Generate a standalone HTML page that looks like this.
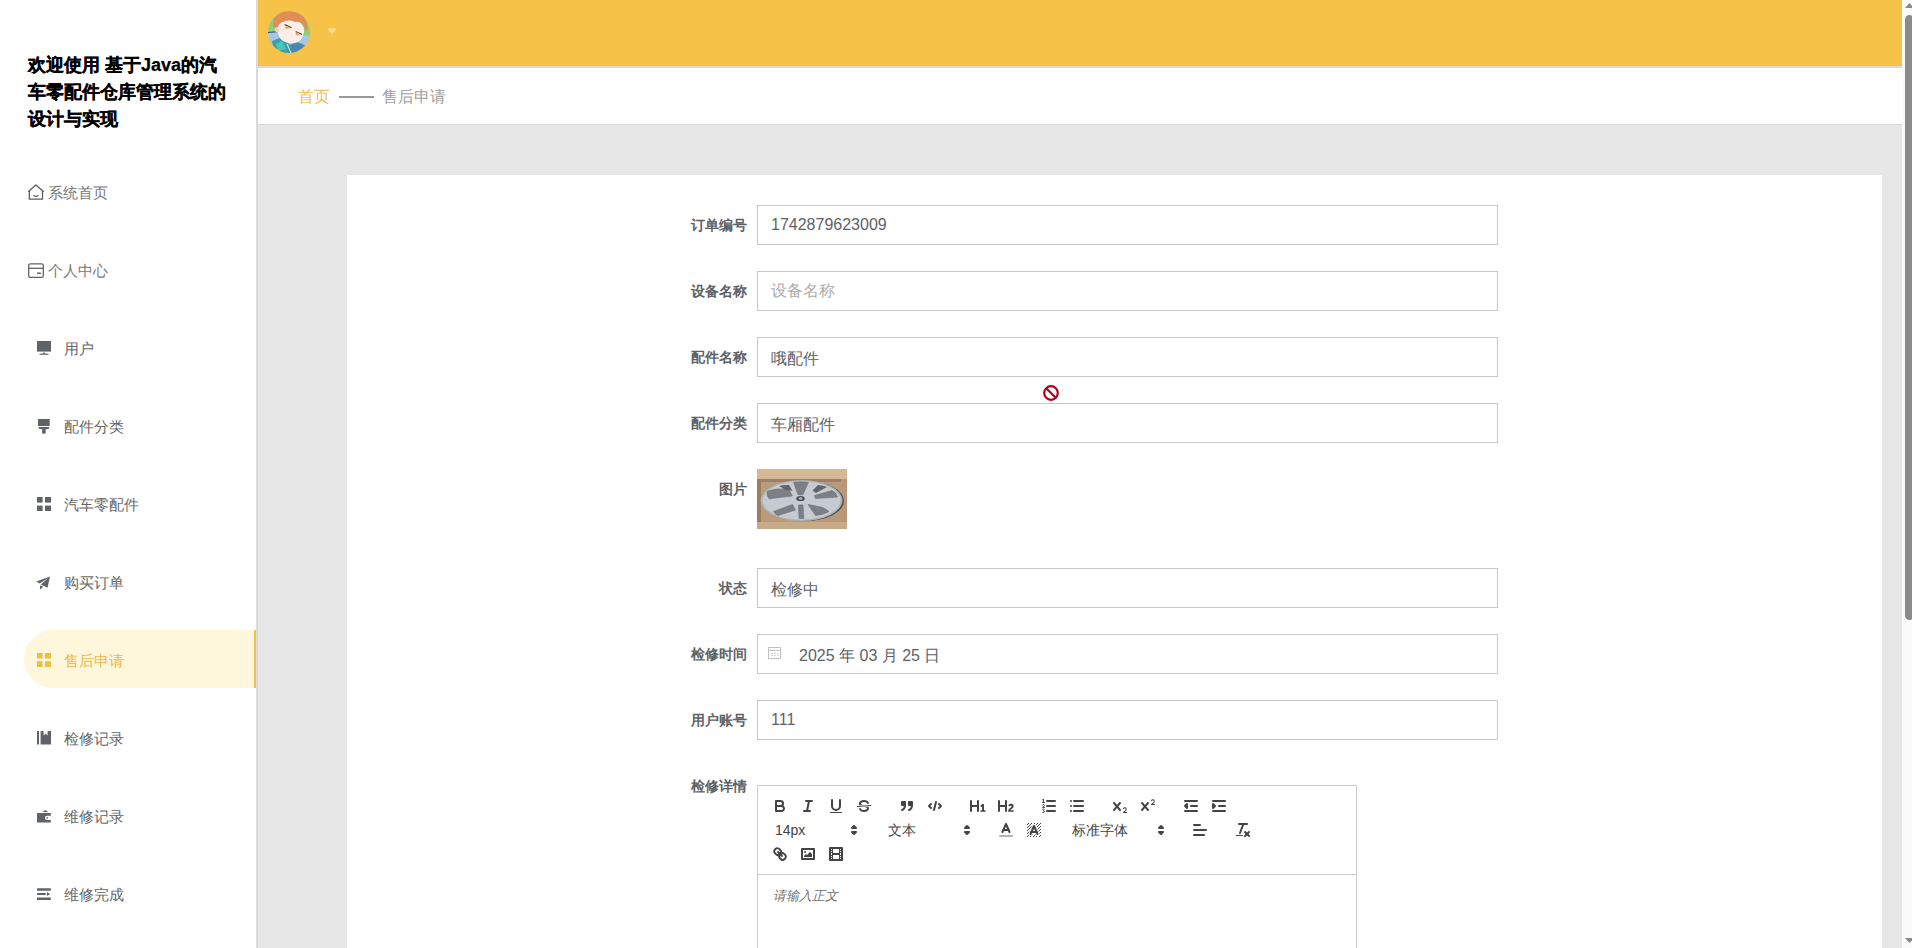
<!DOCTYPE html>
<html><head><meta charset="utf-8">
<style>
*{box-sizing:border-box;margin:0;padding:0}
html,body{width:1912px;height:948px;overflow:hidden;background:#fff;font-family:"Liberation Sans",sans-serif}
#side{position:absolute;left:0;top:0;width:256px;height:948px;background:#fff}
#sideb{position:absolute;left:256px;top:0;width:2px;height:948px;background:#d9d9d9}
#title{position:absolute;left:28px;top:52px;width:205px;font-size:18px;font-weight:bold;line-height:27px;color:#000;-webkit-text-stroke:0.25px #000}
.mi{position:absolute;left:0;width:256px;height:58px;font-size:15px;color:#666}
.mi .tx{position:absolute;top:21px;line-height:18px;white-space:nowrap}
.mi svg{position:absolute}
.mi.act{left:24px;width:232px;background:#fef7dc;border-radius:29px 0 0 29px;color:#ecb84a}
.mi.act:after{content:"";position:absolute;right:0;top:0;width:2px;height:58px;background:#ecc25a}
#hdr{position:absolute;left:258px;top:0;width:1644px;height:66px;background:#f6c348}
#hdrb{position:absolute;left:258px;top:66px;width:1644px;height:2px;background:#dcd6d8}
#bc{position:absolute;left:258px;top:68px;width:1644px;height:56px;background:#fff}
#bcb{position:absolute;left:258px;top:124px;width:1644px;height:1px;background:#d6d6d6}
#main{position:absolute;left:258px;top:125px;width:1644px;height:823px;background:#e7e7e7}
#card{position:absolute;left:347px;top:175px;width:1535px;height:773px;background:#fff}
#sb{position:absolute;left:1902px;top:0;width:10px;height:948px;background:#fbfbfb}
.lab{position:absolute;left:600px;width:147px;text-align:right;font-size:14px;font-weight:bold;color:#606266;line-height:20px}
.inp{position:absolute;left:757px;width:741px;height:40px;border:1px solid #c9c9c9;background:#fff;font-size:16px;color:#606266;padding-left:13px;line-height:38px;white-space:nowrap}
.ph{color:#acacac}
#ed{position:absolute;left:757px;top:785px;width:600px}
#tb{border:1px solid #ccc;padding:8px;font-family:"Liberation Sans",sans-serif;line-height:0}
#tb:after{content:"";display:table;clear:both}
.fm{display:inline-block;vertical-align:middle;margin-right:15px}
.fm:after{content:"";display:table;clear:both}
.b{display:inline-block;float:left;width:28px;height:24px;padding:3px 5px}
.b svg{float:left;height:100%;width:18px}
.s{fill:none;stroke:#444;stroke-linecap:round;stroke-linejoin:round;stroke-width:2}
.s.t{stroke-width:1}
.f{fill:#444}
.f.s{fill:#444}
.pk{display:inline-block;float:left;height:24px;position:relative;vertical-align:middle;color:#444;font-size:14px;font-weight:500}
.pl{position:absolute;left:0;top:0;height:24px;padding-left:9px;line-height:24px;white-space:nowrap}
.pk svg{position:absolute;right:1px;top:3px;width:18px;height:18px}
#ct{border:1px solid #ccc;border-top:0;height:200px;position:relative}
#plh{position:absolute;left:15px;top:12px;font-size:13px;line-height:18px;font-style:italic;color:rgba(0,0,0,0.6)}
</style></head><body>
<div id="side">
  <div id="title">欢迎使用 基于Java的汽车零配件仓库管理系统的设计与实现</div>
  <div class="mi" style="top:163px">
    <svg style="left:28px;top:21px" width="16" height="16" viewBox="0 0 16 16"><path d="M0.7 7.3 L7.8 0.9 L15.2 7.3" fill="none" stroke="#5e5e5e" stroke-width="1.3" stroke-linejoin="round" stroke-linecap="round"/><path d="M1.3 6.9 V15.2 H14.5 V6.9" fill="none" stroke="#5e5e5e" stroke-width="1.3" stroke-linejoin="round"/><path d="M5.6 11.5 Q7.9 13.4 10.2 11.5" fill="none" stroke="#5e5e5e" stroke-width="1.1" stroke-linecap="round"/></svg>
    <span class="tx" style="left:48px;color:#777">系统首页</span>
  </div>
  <div class="mi" style="top:241px">
    <svg style="left:28px;top:22px" width="16" height="16" viewBox="0 0 16 16"><rect x="0.7" y="0.8" width="14.6" height="13.6" rx="1.6" fill="none" stroke="#636363" stroke-width="1.3"/><line x1="0.7" y1="5.3" x2="15.3" y2="5.3" stroke="#636363" stroke-width="1.3"/><line x1="9.6" y1="10.2" x2="12.4" y2="10.2" stroke="#636363" stroke-width="1.5" stroke-linecap="round"/></svg>
    <span class="tx" style="left:48px;color:#777">个人中心</span>
  </div>
  <div class="mi" style="top:319px">
    <svg style="left:37px;top:22px" width="14" height="14" viewBox="0 0 14 14"><rect x="0" y="0" width="14" height="10.6" fill="#5f6368"/><rect x="2.5" y="12.6" width="9" height="1.2" fill="#5f6368"/><rect x="6" y="11.6" width="2" height="1.2" fill="#5f6368"/></svg>
    <span class="tx" style="left:64px">用户</span>
  </div>
  <div class="mi" style="top:397px">
    <svg style="left:38px;top:22px" width="12" height="15" viewBox="0 0 12 15"><rect x="0" y="0.1" width="11.7" height="6.8" rx="0.4" fill="#5f6368"/><path d="M0.7 8.1 H11 V9.6 Q10.6 10.2 8 10.3 H3.7 Q1.1 10.2 0.7 9.6 Z" fill="#5f6368"/><rect x="4.1" y="9.8" width="3.6" height="4.9" rx="1.3" fill="#5f6368"/></svg>
    <span class="tx" style="left:64px">配件分类</span>
  </div>
  <div class="mi" style="top:475px">
    <svg style="left:37px;top:22px" width="14" height="14" viewBox="0 0 14 14"><rect x="0" y="0" width="5.6" height="5.6" fill="#5f6368"/><rect x="8" y="0" width="6" height="5.6" fill="#5f6368"/><rect x="0" y="8.6" width="5.6" height="5.4" fill="#5f6368"/><rect x="8" y="8.6" width="6" height="5.4" fill="#5f6368"/></svg>
    <span class="tx" style="left:64px">汽车零配件</span>
  </div>
  <div class="mi" style="top:553px">
    <svg style="left:36px;top:23px" width="15" height="15" viewBox="0 0 15 15"><path d="M14 0.5 L0.3 5.5 L3.6 7.6 L12 2.2 L4.8 8.4 L11.5 11.8 Z" fill="#5f6368"/><path d="M4.2 9.2 L3.8 13.8 L7.2 10.8 Z" fill="#5f6368"/></svg>
    <span class="tx" style="left:64px">购买订单</span>
  </div>
  <div class="mi act" style="top:630px">
    <svg style="left:13px;top:23px" width="14" height="14" viewBox="0 0 14 14"><rect x="0" y="0" width="5.6" height="5.6" fill="#eebf45"/><rect x="8" y="0" width="6" height="5.6" fill="#eebf45"/><rect x="0" y="8.2" width="5.6" height="5.8" fill="#eebf45"/><rect x="8" y="8.2" width="6" height="5.8" fill="#eebf45"/></svg>
    <span class="tx" style="left:40px;top:22px">售后申请</span>
  </div>
  <div class="mi" style="top:709px">
    <svg style="left:37px;top:22px" width="14" height="14" viewBox="0 0 14 14"><rect x="0" y="0" width="2" height="13.5" fill="#5f6368"/><path d="M3.6 0 H6.6 V4.4 L8.6 2.6 L10.6 4.4 V0 H14 V13.5 H3.6 Z" fill="#5f6368"/></svg>
    <span class="tx" style="left:64px">检修记录</span>
  </div>
  <div class="mi" style="top:787px">
    <svg style="left:37px;top:22px" width="14" height="14" viewBox="0 0 14 14"><path d="M5.6 2.9 Q8.3 -0.2 11 2.9 Z" fill="#5f6368"/><path d="M0 4 H13.8 V6.8 H10 A2.1 2.1 0 0 0 10 11 H13.8 V13.6 H0 Z" fill="#5f6368"/><circle cx="10.2" cy="8.9" r="0.8" fill="#5f6368"/></svg>
    <span class="tx" style="left:64px">维修记录</span>
  </div>
  <div class="mi" style="top:865px">
    <svg style="left:37px;top:22px" width="14" height="14" viewBox="0 0 14 14"><rect x="0" y="1.3" width="13.8" height="2.5" rx="0.5" fill="#5f6368"/><rect x="0" y="6.1" width="8.7" height="1.9" rx="0.5" fill="#5f6368"/><path d="M9.9 5 L13.2 7 L9.9 8.9 Z" fill="#5f6368"/><rect x="0" y="10.5" width="13.8" height="2.4" rx="0.5" fill="#5f6368"/></svg>
    <span class="tx" style="left:64px">维修完成</span>
  </div>
</div>
<div id="sideb"></div>
<div id="hdr">
  <svg style="position:absolute;left:10px;top:11px" width="42" height="42" viewBox="0 0 42 42">
    <defs><clipPath id="av"><circle cx="21" cy="21" r="21"/></clipPath><filter id="avb" x="-5%" y="-5%" width="110%" height="110%"><feGaussianBlur stdDeviation="0.45"/></filter></defs>
    <g clip-path="url(#av)"><g filter="url(#avb)">
      <rect width="42" height="42" fill="#8fcf7a"/>
      <path d="M0 21 L12 20 L20 30 L28 23 L42 25 V42 H0 Z" fill="#a6c6e6"/>
      <path d="M4 30 L14 26 L22 34 L30 30 L34 42 H6 Z" fill="#3f9fa6"/>
      <path d="M8 33 L14 30 L18 38 L10 40 Z" fill="#47c6bd"/>
      <path d="M22 34 L32 32 L40 36 L36 42 H24 Z" fill="#4b86b3"/>
      <path d="M0 21.5 L11 20.5" stroke="#2a4a6a" stroke-width="1"/>
      <path d="M19 33 L23 42" stroke="#e6f0f2" stroke-width="1"/>
      <path d="M9 14 Q12 7 22 8 Q33 9 36 17 Q37 26 30 31 Q22 34 15 30 Q9 26 9 14 Z" fill="#fcefea"/>
      <ellipse cx="9" cy="18.5" rx="2.2" ry="2.8" fill="#f3cfc4"/>
      <path d="M5 17 Q4 6 12 2 Q22 -2 32 2 Q40 7 39.5 22 Q37 17 35 14 Q33 10 27 11 Q22 8.5 16 10.5 Q11 11.5 10 16 Z" fill="#e28d56"/>
      
      <path d="M17 13.8 L23 16.6" stroke="#3a2e28" stroke-width="1.1" stroke-linecap="round"/>
      <ellipse cx="19" cy="16.5" rx="2" ry="1.5" fill="#e3b25c"/>
      <path d="M28 20.8 L33.5 23.2" stroke="#3a2e28" stroke-width="1.1" stroke-linecap="round"/>
      <ellipse cx="29.5" cy="23" rx="2" ry="1.4" fill="#e3b25c"/>
    </g></g>
  </svg>
  <svg style="position:absolute;left:69px;top:28px" width="10" height="7" viewBox="0 0 10 7"><path d="M0.5 0.5 H9.5 L5 6.5 Z" fill="#fadd92"/></svg>
</div>
<div id="hdrb"></div>
<div id="bc">
  <span style="position:absolute;left:40px;top:20px;font-size:16px;line-height:18px;color:#efbd4c">首页</span>
  <span style="position:absolute;left:81px;top:28px;width:35px;height:2px;background:#9a9a9a"></span>
  <span style="position:absolute;left:124px;top:20px;font-size:16px;line-height:18px;color:#a0a0a0">售后申请</span>
</div>
<div id="bcb"></div>
<div id="main"></div>
<div id="card"></div>

<div class="lab" style="top:215px">订单编号</div>
<div class="inp" style="top:205px">1742879623009</div>
<div class="lab" style="top:281px">设备名称</div>
<div class="inp ph" style="top:271px">设备名称</div>
<div class="lab" style="top:347px">配件名称</div>
<div class="inp" style="top:337px;line-height:42px">哦配件</div>
<div class="lab" style="top:413px">配件分类</div>
<div class="inp" style="top:403px;line-height:42px">车厢配件</div>
<div class="lab" style="top:479px">图片</div>
<svg style="position:absolute;left:757px;top:469px" width="90" height="60" viewBox="0 0 90 60">
  <rect width="90" height="60" fill="#b99a7a"/>
  <rect x="0" y="0" width="90" height="10" fill="#d5b994"/>
  <rect x="0" y="10" width="90" height="3" fill="#9a8068"/>
  <rect x="0" y="10" width="4" height="50" fill="#9c7e62"/>
  <rect x="84" y="10" width="6" height="50" fill="#b89878"/>
  <rect x="0" y="53" width="90" height="7" fill="#c8aa88"/>
  <ellipse cx="48" cy="32" rx="39" ry="20" fill="#4f5356"/>
  <ellipse cx="44.5" cy="31.5" rx="41" ry="20.5" fill="#aeb3b7"/>
  <ellipse cx="44.5" cy="31.5" rx="39" ry="19.3" fill="#c7cbcf"/>
  <g fill="#7a8086" stroke="#6a7076" stroke-width="0.6" stroke-linejoin="round">
    <path d="M36.5 13.2 Q44 12.2 51.5 13.2 L46 25.5 Q43.5 26.2 41 25.5 Z"/>
    <path d="M10.5 22 Q20 19 31.5 20 L35.5 27 L12 29.8 Q9 26 10.5 22 Z"/>
    <path d="M57.5 26.5 L75 21.5 Q79.5 23.5 80.5 28 L58.5 29.5 Z"/>
    <path d="M16.5 42.5 L35.5 35.5 L38.5 41 L21 46.5 Q17.5 45 16.5 42.5 Z"/>
    <path d="M51 35.5 L66 38.5 L72 42.5 Q66 46 58.5 46.5 Z"/>
    <path d="M41.5 36 L46 36 L46.8 49.5 L42 49.5 Z"/>
  </g>
  <g fill="#5f656b">
    <path d="M22 17 Q27 15.5 32 16 L35.5 22 L28 20.5 Z"/>
    <path d="M55.5 21.5 L61 16 Q66 16.5 70 18 L59 24 Z"/>
  </g>
  <ellipse cx="43.5" cy="29.5" rx="4.2" ry="2.6" fill="#3d4850"/>
  <ellipse cx="43.5" cy="29.5" rx="2" ry="1.2" fill="#b4babe"/>
</svg>
<div class="lab" style="top:578px">状态</div>
<div class="inp" style="top:568px;line-height:42px">检修中</div>
<div class="lab" style="top:644px">检修时间</div>
<div class="inp" style="top:634px;padding-left:41px;line-height:42px">2025 年 03 月 25 日
  <svg style="position:absolute;left:10px;top:12px" width="13" height="12" viewBox="0 0 13 12"><rect x="0.5" y="0.5" width="12" height="11" fill="none" stroke="#c2c2c2"/><line x1="0.5" y1="3.4" x2="12.5" y2="3.4" stroke="#c2c2c2"/><g fill="#cbcbcb"><rect x="3.2" y="6" width="1.8" height="1"/><rect x="6" y="6" width="1.8" height="1"/><rect x="9" y="6" width="1.6" height="1"/><rect x="3.2" y="8.1" width="1.8" height="1"/><rect x="6" y="8.1" width="1.8" height="1"/><rect x="9" y="8.1" width="1.6" height="1"/></g></svg>
</div>
<div class="lab" style="top:710px">用户账号</div>
<div class="inp" style="top:700px">111</div>
<div class="lab" style="top:776px">检修详情</div>

<div id="ed">
  <div id="tb">
    <span class="fm">
      <i class="b"><svg viewBox="0 0 18 18"><path class="s" d="M5,4H9.5A2.5,2.5,0,0,1,12,6.5v0A2.5,2.5,0,0,1,9.5,9H5A0,0,0,0,1,5,9V4A0,0,0,0,1,5,4Z"/><path class="s" d="M5,9h5.5A2.5,2.5,0,0,1,13,11.5v0A2.5,2.5,0,0,1,10.5,14H5a0,0,0,0,1,0,0V9A0,0,0,0,1,5,9Z"/></svg></i>
      <i class="b"><svg viewBox="0 0 18 18"><line class="s" x1="7" x2="13" y1="4" y2="4"/><line class="s" x1="5" x2="11" y1="14" y2="14"/><line class="s" x1="8" x2="10" y1="14" y2="4"/></svg></i>
      <i class="b"><svg viewBox="0 0 18 18"><path class="s" d="M5,3V9a4.012,4.012,0,0,0,4,4H9a4.012,4.012,0,0,0,4-4V3"/><rect class="f" height="1" rx="0.5" ry="0.5" width="12" x="3" y="15"/></svg></i>
      <i class="b"><svg viewBox="0 0 18 18"><line class="s t" x1="15.5" x2="2.5" y1="8.5" y2="9.5"/><path class="f" d="M9.007,8C6.542,7.791,6,7.519,6,6.5,6,5.792,7.283,5,9,5c1.571,0,2.765.679,2.969,1.309a1,1,0,0,0,1.9-.617C13.356,4.106,11.354,3,9,3,6.2,3,4,4.538,4,6.5a3.2,3.2,0,0,0,.5,1.843Z"/><path class="f" d="M8.984,10C11.457,10.208,12,10.479,12,11.5c0,0.708-1.283,1.5-3,1.5-1.571,0-2.765-.679-2.969-1.309a1,1,0,1,0-1.9.617C4.644,13.894,6.646,15,9,15c2.8,0,5-1.538,5-3.5a3.2,3.2,0,0,0-.5-1.843Z"/></svg></i>
    </span><span class="fm">
      <i class="b"><svg viewBox="0 0 18 18"><rect class="f s" height="3" width="3" x="4" y="5"/><rect class="f s" height="3" width="3" x="11" y="5"/><path class="s" fill="none" d="M7,8c0,4.031-3,5-3,5"/><path class="s" fill="none" d="M14,8c0,4.031-3,5-3,5"/></svg></i>
      <i class="b"><svg viewBox="0 0 18 18"><polyline class="s" points="5 7 3 9 5 11"/><polyline class="s" points="13 7 15 9 13 11"/><line class="s" x1="10" x2="8" y1="5" y2="13"/></svg></i>
    </span><span class="fm">
      <i class="b"><svg viewBox="0 0 18 18"><path class="f" d="M10,4V14a1,1,0,0,1-2,0V10H3v4a1,1,0,0,1-2,0V4A1,1,0,0,1,3,4V8H8V4a1,1,0,0,1,2,0Zm6.06787,9.209H14.98975V7.59863a.54085.54085,0,0,0-.605-.60547h-.62744a1.01119,1.01119,0,0,0-.748.29688L11.645,8.56641a.5435.5435,0,0,0-.022.8584l.28613.30762a.53861.53861,0,0,0,.84717.0332l.09912-.08789a1.2137,1.2137,0,0,0,.2417-.35254h.02246s-.01123.30859-.01123.60547V13.209H12.041a.54085.54085,0,0,0-.605.60547v.43945a.54085.54085,0,0,0,.605.60547h4.02686a.54085.54085,0,0,0,.605-.60547v-.43945A.54085.54085,0,0,0,16.06787,13.209Z"/></svg></i>
      <i class="b"><svg viewBox="0 0 18 18"><path class="f" d="M16.73975,13.81445v.43945a.54085.54085,0,0,1-.605.60547H11.855a.58392.58392,0,0,1-.64893-.60547V14.0127c0-2.90527,3.39941-3.42187,3.39941-4.55469a.77675.77675,0,0,0-.84717-.78125,1.17684,1.17684,0,0,0-.83594.38477c-.2749.26367-.561.374-.85791.13184l-.4292-.34082c-.30811-.24219-.38525-.51758-.1543-.81445a2.97155,2.97155,0,0,1,2.45361-1.17676,2.45393,2.45393,0,0,1,2.68408,2.40918c0,2.45312-3.1792,2.92676-3.27832,3.93848h2.79443A.54085.54085,0,0,1,16.73975,13.81445ZM9,3A.99974.99974,0,0,0,8,4V8H3V4A1,1,0,0,0,1,4V14a1,1,0,0,0,2,0V10H8v4a1,1,0,0,0,2,0V4A.99974.99974,0,0,0,9,3Z"/></svg></i>
    </span><span class="fm">
      <i class="b"><svg viewBox="0 0 18 18"><line class="s" x1="7" x2="15" y1="4" y2="4"/><line class="s" x1="7" x2="15" y1="9" y2="9"/><line class="s" x1="7" x2="15" y1="14" y2="14"/><line class="s t" x1="2.5" x2="4.5" y1="5.5" y2="5.5"/><path class="f" d="M3.5,6A0.5,0.5,0,0,1,3,5.5V3.085l-0.276.138A0.5,0.5,0,0,1,2.053,3c-0.124-.247-0.023-0.324.224-0.447l1-.5A0.5,0.5,0,0,1,4,2.5v3A0.5,0.5,0,0,1,3.5,6Z"/><path class="s t" d="M4.5,10.5h-2c0-.234,1.85-1.076,1.85-2.234A0.959,0.959,0,0,0,2.5,8.156"/><path class="s t" d="M2.5,12.2 C3.2,11.7 4.4,12 4.3,12.9 C4.2,13.5 3.7,13.7 3.4,13.8 C3.9,13.9 4.5,14.2 4.4,14.9 C4.3,15.8 3,15.9 2.5,15.4"/></svg></i>
      <i class="b"><svg viewBox="0 0 18 18"><line class="s" x1="6" x2="15" y1="4" y2="4"/><line class="s" x1="6" x2="15" y1="9" y2="9"/><line class="s" x1="6" x2="15" y1="14" y2="14"/><line class="s" x1="3" x2="3" y1="4" y2="4"/><line class="s" x1="3" x2="3" y1="9" y2="9"/><line class="s" x1="3" x2="3" y1="14" y2="14"/></svg></i>
    </span><span class="fm">
      <i class="b"><svg viewBox="0 0 18 18"><path class="f" d="M15.5,15H13.861a3.858,3.858,0,0,0,1.914-2.975,1.8,1.8,0,0,0-1.6-1.751A1.921,1.921,0,0,0,12.021,11.7a0.50013,0.50013,0,1,0,.957.291h0a0.914,0.914,0,0,1,1.053-.725,0.81,0.81,0,0,1,.744.762c0,1.076-1.16971,1.86982-1.93971,2.43082A1.45639,1.45639,0,0,0,12,15.5a0.5,0.5,0,0,0,.5.5h3A0.5,0.5,0,0,0,15.5,15Z"/><path class="f" d="M9.65,5.241a1,1,0,0,0-1.409.108L6,7.964,3.759,5.349A1,1,0,0,0,2.192,6.59178Q2.21541,6.6213,2.241,6.649L4.684,9.5,2.241,12.35A1,1,0,0,0,3.71,13.70722q0.02557-.02768.049-0.05722L6,11.036,8.241,13.65a1,1,0,1,0,1.567-1.24277Q9.78459,12.3777,9.759,12.35L7.316,9.5,9.759,6.651A1,1,0,0,0,9.65,5.241Z"/></svg></i>
      <i class="b"><svg viewBox="0 0 18 18"><path class="f" d="M15.5,7H13.861a4.015,4.015,0,0,0,1.914-2.975,1.8,1.8,0,0,0-1.6-1.751A1.922,1.922,0,0,0,12.021,3.7a0.5,0.5,0,1,0,.957.291,0.917,0.917,0,0,1,1.053-.725,0.81,0.81,0,0,1,.744.762c0,1.077-1.164,1.925-1.934,2.486A1.423,1.423,0,0,0,12,7.5a0.5,0.5,0,0,0,.5.5h3A0.5,0.5,0,0,0,15.5,7Z"/><path class="f" d="M9.651,5.241a1,1,0,0,0-1.41.108L6,7.964,3.759,5.349a1,1,0,1,0-1.519,1.3L4.683,9.5,2.241,12.35a1,1,0,1,0,1.519,1.3L6,11.036,8.241,13.65a1,1,0,0,0,1.519-1.3L7.317,9.5,9.759,6.651A1,1,0,0,0,9.651,5.241Z"/></svg></i>
    </span><span class="fm">
      <i class="b"><svg viewBox="0 0 18 18"><line class="s" x1="3" x2="15" y1="14" y2="14"/><line class="s" x1="3" x2="15" y1="4" y2="4"/><line class="s" x1="9" x2="15" y1="9" y2="9"/><polyline class="s" points="5 7 5 11 3 9 5 7"/></svg></i>
      <i class="b"><svg viewBox="0 0 18 18"><line class="s" x1="3" x2="15" y1="14" y2="14"/><line class="s" x1="3" x2="15" y1="4" y2="4"/><line class="s" x1="9" x2="15" y1="9" y2="9"/><polyline class="f s" points="3 7 3 11 5 9 3 7"/></svg></i>
    </span><span class="fm">
      <span class="pk" style="width:98px"><span class="pl">14px</span><svg viewBox="0 0 18 18"><polygon class="s" points="7 11 9 13 11 11 7 11"/><polygon class="s" points="7 7 9 5 11 7 7 7"/></svg></span>
    </span><span class="fm">
      <span class="pk" style="width:98px"><span class="pl">文本</span><svg viewBox="0 0 18 18"><polygon class="s" points="7 11 9 13 11 11 7 11"/><polygon class="s" points="7 7 9 5 11 7 7 7"/></svg></span>
    </span><span class="fm">
      <i class="b"><svg viewBox="0 0 18 18"><line class="s" style="opacity:.4" x1="3" x2="15" y1="15" y2="15"/><polyline class="s" points="5.5 11 9 3 12.5 11"/><line class="s" x1="11.63" x2="6.38" y1="9" y2="9"/></svg></i>
      <i class="b"><svg viewBox="0 0 18 18"><g class="f"><polygon points="6 6.868 6 6 5 6 5 7 5.942 7 6 6.868"/><rect height="1" width="1" x="4" y="4"/><polygon points="6.817 5 6 5 6 6 6.38 6 6.817 5"/><rect height="1" width="1" x="2" y="6"/><rect height="1" width="1" x="3" y="5"/><rect height="1" width="1" x="4" y="7"/><polygon points="4 11.439 4 11 3 11 3 12 3.755 12 4 11.439"/><rect height="1" width="1" x="2" y="12"/><rect height="1" width="1" x="2" y="9"/><rect height="1" width="1" x="2" y="15"/><polygon points="4.63 10 4 10 4 11 4.192 11 4.63 10"/><rect height="1" width="1" x="3" y="8"/><path d="M10.832,4.2L11,4.582V4H10.708A1.948,1.948,0,0,1,10.832,4.2Z"/><path d="M7,4.582L7.168,4.2A1.929,1.929,0,0,1,7.292,4H7V4.582Z"/><path d="M8,13H7.683l-0.351.8a1.933,1.933,0,0,1-.124.2H8V13Z"/><rect height="1" width="1" x="12" y="2"/><rect height="1" width="1" x="11" y="3"/><path d="M9,3H8V3.282A1.985,1.985,0,0,1,9,3Z"/><rect height="1" width="1" x="2" y="3"/><rect height="1" width="1" x="6" y="2"/><rect height="1" width="1" x="3" y="2"/><rect height="1" width="1" x="5" y="3"/><rect height="1" width="1" x="9" y="2"/><rect height="1" width="1" x="15" y="14"/><polygon points="13.447 10.174 13.469 10.225 13.472 10.232 13.808 11 14 11 14 10 13.37 10 13.447 10.174"/><rect height="1" width="1" x="13" y="7"/><rect height="1" width="1" x="15" y="5"/><rect height="1" width="1" x="14" y="6"/><rect height="1" width="1" x="15" y="8"/><rect height="1" width="1" x="14" y="9"/><path d="M3.775,14H3v1H4V14.314A1.97,1.97,0,0,1,3.775,14Z"/><rect height="1" width="1" x="14" y="3"/><polygon points="12 6.868 12 6 11.62 6 12 6.868"/><rect height="1" width="1" x="15" y="2"/><rect height="1" width="1" x="12" y="5"/><rect height="1" width="1" x="13" y="4"/><polygon points="12.933 9 13 9 13 8 12.495 8 12.933 9"/><rect height="1" width="1" x="9" y="14"/><rect height="1" width="1" x="8" y="15"/><path d="M6,14.926V15H7V14.316A1.993,1.993,0,0,1,6,14.926Z"/><rect height="1" width="1" x="5" y="15"/><path d="M10.668,13.8L10.317,13H10v1h0.792A1.947,1.947,0,0,1,10.668,13.8Z"/><rect height="1" width="1" x="11" y="15"/><path d="M14.332,12.2a1.99,1.99,0,0,1,.166.8H15V12H14.245Z"/><rect height="1" width="1" x="14" y="15"/><rect height="1" width="1" x="15" y="11"/></g><polyline class="s" points="5.5 13 9 5 12.5 13"/><line class="s" x1="11.63" x2="6.38" y1="11" y2="11"/></svg></i>
    </span><span class="fm">
      <span class="pk" style="width:108px"><span class="pl">标准字体</span><svg viewBox="0 0 18 18"><polygon class="s" points="7 11 9 13 11 11 7 11"/><polygon class="s" points="7 7 9 5 11 7 7 7"/></svg></span>
    </span><span class="fm">
      <i class="b"><svg viewBox="0 0 18 18"><line class="s" x1="3" x2="15" y1="9" y2="9"/><line class="s" x1="3" x2="13" y1="14" y2="14"/><line class="s" x1="3" x2="9" y1="4" y2="4"/></svg></i>
    </span><span class="fm">
      <i class="b"><svg viewBox="0 0 18 18"><line class="s" x1="5" x2="13" y1="3" y2="3"/><line class="s" x1="6" x2="9.35" y1="12" y2="3"/><line class="s" x1="11" x2="15" y1="11" y2="15"/><line class="s" x1="15" x2="11" y1="11" y2="15"/><rect class="f" height="1" rx="0.5" ry="0.5" width="7" x="2" y="14"/></svg></i>
    </span><span class="fm">
      <i class="b"><svg viewBox="0 0 18 18"><line class="s" x1="7" x2="11" y1="7" y2="11"/><path class="s" d="M8.9,4.577a3.476,3.476,0,0,1,.36,4.679A3.476,3.476,0,0,1,4.577,8.9C3.185,7.5,2.035,6.4,4.217,4.217S7.5,3.185,8.9,4.577Z"/><path class="s" d="M13.423,9.1a3.476,3.476,0,0,0-4.679-.36,3.476,3.476,0,0,0,.36,4.679c1.392,1.392,2.5,2.542,4.679.36S14.815,10.5,13.423,9.1Z"/></svg></i>
      <i class="b"><svg viewBox="0 0 18 18"><rect class="s" height="10" width="12" x="3" y="4"/><circle class="f" cx="6" cy="7" r="1"/><polyline class="f" points="5 12 5 11 7 9 8 10 11 7 13 9 13 12 5 12"/></svg></i>
      <i class="b"><svg viewBox="0 0 18 18"><rect class="s" height="12" width="12" x="3" y="3"/><rect class="f" height="12" width="1" x="5" y="3"/><rect class="f" height="12" width="1" x="12" y="3"/><rect class="f" height="2" width="8" x="5" y="8"/><rect class="f" height="1" width="3" x="3" y="5"/><rect class="f" height="1" width="3" x="3" y="7"/><rect class="f" height="1" width="3" x="3" y="10"/><rect class="f" height="1" width="3" x="3" y="12"/><rect class="f" height="1" width="3" x="12" y="5"/><rect class="f" height="1" width="3" x="12" y="7"/><rect class="f" height="1" width="3" x="12" y="10"/><rect class="f" height="1" width="3" x="12" y="12"/></svg></i>
    </span>
  </div>
  <div id="ct"><span id="plh">请输入正文</span></div>
</div>

<svg style="position:absolute;left:1043px;top:385px" width="16" height="16" viewBox="0 0 16 16"><circle cx="8" cy="8" r="6.8" fill="none" stroke="#b00020" stroke-width="2.2"/><line x1="3.5" y1="3.5" x2="12.5" y2="12.5" stroke="#b00020" stroke-width="2.2"/></svg>
<div id="sb">
  <svg style="position:absolute;left:0;top:0" width="10" height="948" viewBox="0 0 10 948">
    <path d="M3 8 L7.5 3 L12 8 Z" fill="#8a8a8a"/>
    <rect x="3" y="15" width="9" height="605" rx="4.5" fill="#8a8a8a"/>
    <path d="M3 938 L7.5 943 L12 938 Z" fill="#8a8a8a"/>
  </svg>
</div>
</body></html>
